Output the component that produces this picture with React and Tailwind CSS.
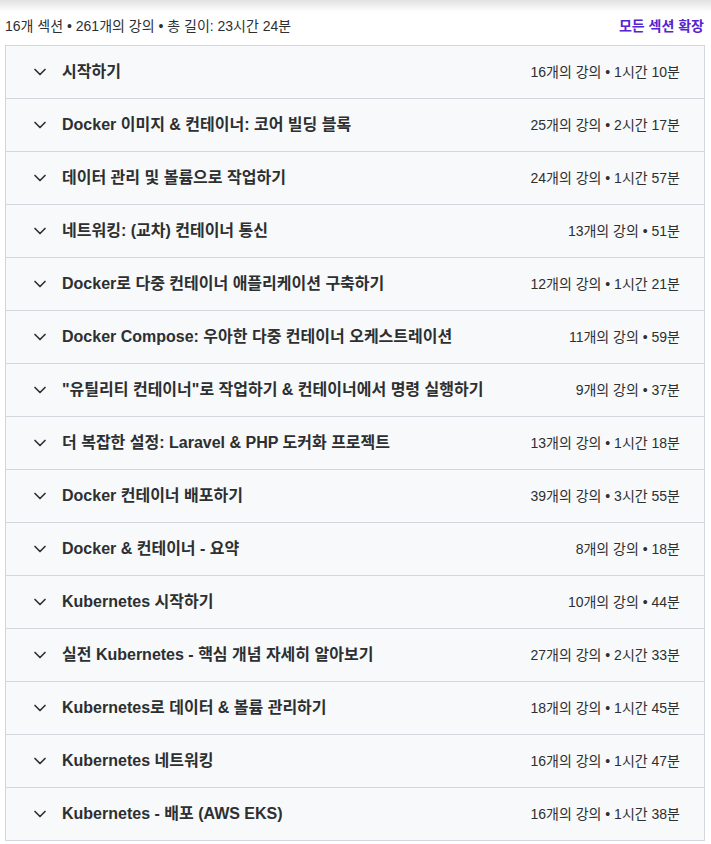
import { ChevronDown } from "lucide-react";

const sections = [
  { title: "시작하기", meta: "16개의 강의 • 1시간 10분" },
  { title: "Docker 이미지 & 컨테이너: 코어 빌딩 블록", meta: "25개의 강의 • 2시간 17분" },
  { title: "데이터 관리 및 볼륨으로 작업하기", meta: "24개의 강의 • 1시간 57분" },
  { title: "네트워킹: (교차) 컨테이너 통신", meta: "13개의 강의 • 51분" },
  { title: "Docker로 다중 컨테이너 애플리케이션 구축하기", meta: "12개의 강의 • 1시간 21분" },
  { title: "Docker Compose: 우아한 다중 컨테이너 오케스트레이션", meta: "11개의 강의 • 59분" },
  { title: "\"유틸리티 컨테이너\"로 작업하기 & 컨테이너에서 명령 실행하기", meta: "9개의 강의 • 37분" },
  { title: "더 복잡한 설정: Laravel & PHP 도커화 프로젝트", meta: "13개의 강의 • 1시간 18분" },
  { title: "Docker 컨테이너 배포하기", meta: "39개의 강의 • 3시간 55분" },
  { title: "Docker & 컨테이너 - 요약", meta: "8개의 강의 • 18분" },
  { title: "Kubernetes 시작하기", meta: "10개의 강의 • 44분" },
  { title: "실전 Kubernetes - 핵심 개념 자세히 알아보기", meta: "27개의 강의 • 2시간 33분" },
  { title: "Kubernetes로 데이터 & 볼륨 관리하기", meta: "18개의 강의 • 1시간 45분" },
  { title: "Kubernetes 네트워킹", meta: "16개의 강의 • 1시간 47분" },
  { title: "Kubernetes - 배포 (AWS EKS)", meta: "16개의 강의 • 1시간 38분" },
];

export default function App() {
  return (
    <div className="h-screen bg-white text-[#2d2f31] font-['Liberation_Sans','Noto_Sans_CJK_KR',sans-serif] overflow-hidden">
      {/* top shadow from sticky bar */}
      <div className="h-3 bg-gradient-to-b from-[#e2e2e2] to-white" />

      <div className="flex items-center justify-between pl-[5px] pr-[7px] pt-[6px] h-[22px]">
        <span className="text-[14px]">16개 섹션 • 261개의 강의 • 총 길이: 23시간 24분</span>
        <button className="text-[14px] font-bold text-[#5624d0]">모든 섹션 확장</button>
      </div>

      <div className="mt-[11px] ml-[5px] w-[700px] border border-[#d1d7dc] border-b-0">
        {sections.map((s, i) => (
          <div
            key={i}
            className="flex items-center h-[53px] border-b border-[#d1d7dc] bg-[#f7f9fa] pl-[24px] pr-[24px]"
          >
            <ChevronDown className="h-5 w-5 text-[#2d2f31] shrink-0" strokeWidth={2} />
            <h3 className="ml-[12px] flex-1 text-[16px] font-bold truncate">{s.title}</h3>
            <span className="text-[14px] ml-4 shrink-0">{s.meta}</span>
          </div>
        ))}
      </div>
    </div>
  );
}
